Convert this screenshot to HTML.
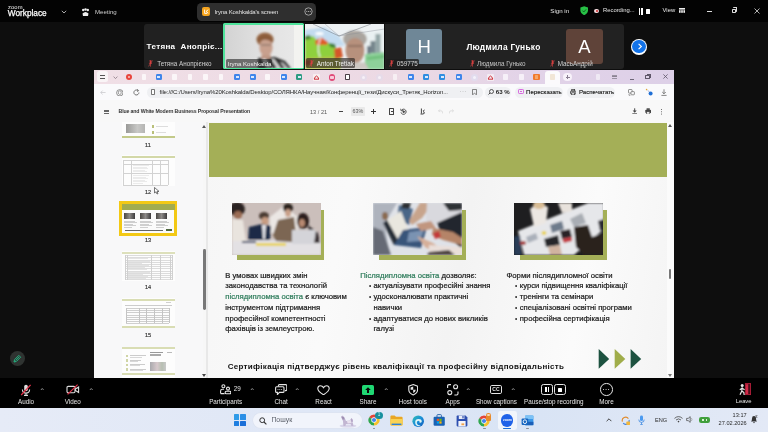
<!DOCTYPE html>
<html lang="uk">
<head>
<meta charset="utf-8">
<title>Zoom Meeting</title>
<style>
*{box-sizing:border-box;margin:0;padding:0}
html,body{width:768px;height:432px;overflow:hidden;background:#0d0d0d;font-family:"Liberation Sans",sans-serif;color:#fff}
#root{position:relative;width:768px;height:432px;overflow:hidden;background:#0e0e0e;opacity:0.9999}
.abs{position:absolute}
#topbar{left:0;top:0;width:768px;height:21.6px;background:#030303}
.t{position:absolute;white-space:nowrap;line-height:1}
/* participant tiles */
.tile{position:absolute;top:24px;height:45px;background:#1b1b1b;border-radius:3px;overflow:hidden}
.tile .nm{position:absolute;left:0;bottom:0;height:9px;font-size:6.3px;line-height:9px;color:#e8e8e8;white-space:nowrap;padding-left:2px}
.pin{display:inline-block;width:5px;height:7px;vertical-align:-1px;margin-right:2px}
/* shared screen */
#share{left:94px;top:70px;width:580px;height:308px;background:#f5f5f5;overflow:hidden}
#tabs{left:0;top:0;width:580px;height:13.7px;background:#ead9e4;overflow:hidden}
#addr{left:0;top:13.7px;width:580px;height:16px;background:#fafafc}
#pdfbar{left:0;top:29.6px;width:580px;height:22.4px;background:#f8f8f8}
#side{left:0;top:52px;width:114px;height:256px;background:#f8f8f9;overflow:hidden}
#main{left:112px;top:52px;width:468px;height:256px;background:#e8e8e8}
#slide{left:2px;top:0;width:458.8px;height:256px;background:linear-gradient(100deg,#f6f6f6 0%,#fafafa 30%,#f3f3f3 55%,#fbfbfb 80%,#f4f4f4 100%)}
#green{left:0.7px;top:0.6px;width:458.1px;height:54.6px;background:#a4af57}
.st{position:absolute;font-size:7.7px;line-height:10.75px;color:#1c1c1c;-webkit-text-stroke:0.22px currentColor;white-space:nowrap;font-family:"Liberation Sans",sans-serif}
.st .g{color:#2f7d5c}
.bu{display:inline-block;width:4.6px;margin-left:8.6px;font-style:normal;font-size:6.4px;-webkit-text-stroke:0}
/* zoom toolbar */
#ztb{left:0;top:378px;width:768px;height:29.5px;background:#000}
.zl{position:absolute;top:21px;font-size:6.3px;color:#e6e6e6;white-space:nowrap;transform:translateX(-50%);line-height:1}
/* taskbar */
#task{left:0;top:407.5px;width:768px;height:24.5px;background:linear-gradient(90deg,#e6ebf7 0%,#dfe7f6 40%,#d9e4f5 70%,#e3e9f6 100%)}
</style>
</head>
<body>
<div id="root">
  <div id="topbar" class="abs"></div>
  <!-- top bar content -->
  <div class="t" style="left:8px;top:4.6px;font-size:5.8px;color:#eee;letter-spacing:0.1px">zoom</div>
  <div class="t" style="left:7.8px;top:10.2px;font-size:8.25px;color:#fff;-webkit-text-stroke:0.25px #fff">Workplace</div>
  <svg class="abs" style="left:61px;top:10px" width="6" height="4" viewBox="0 0 6 4"><path d="M0.8 0.8 L3 3 L5.2 0.8" fill="none" stroke="#bbb" stroke-width="0.9"/></svg>
  <svg class="abs" style="left:81px;top:7.5px" width="9" height="9" viewBox="0 0 9 9"><circle cx="2.2" cy="2" r="1.2" fill="#eee"/><circle cx="6.8" cy="2" r="1.2" fill="#eee"/><circle cx="4.5" cy="1.5" r="1.3" fill="#eee"/><path d="M1.5 5.5 Q4.5 2.5 7.5 5.5 L7 8 L2 8 Z" fill="#eee"/></svg>
  <div class="t" style="left:95px;top:8.8px;font-size:6.1px;color:#cfcfcf">Meeting</div>
  <div class="abs" style="left:197px;top:3px;width:119px;height:17.5px;background:#2f2f2f;border-radius:4.5px"></div>
  <div class="abs" style="left:201.5px;top:7.3px;width:8.6px;height:9px;background:#f6a51f;border-radius:2px"></div>
  <svg class="abs" style="left:203.5px;top:9.4px" width="5" height="5" viewBox="0 0 5 5"><path d="M0.6 0.6 L0.6 4.4 L3.2 4.4 M4.3 0.7 L2 2.5 L4.3 4.2" fill="none" stroke="#fff" stroke-width="0.9"/></svg>
  <div class="t" style="left:214.5px;top:8.6px;font-size:6px;letter-spacing:-0.13px;color:#e2e2e2">Iryna Koshkalda's screen</div>
  <svg class="abs" style="left:303.5px;top:7px" width="9" height="9" viewBox="0 0 9 9"><circle cx="4.5" cy="4.5" r="3.7" fill="none" stroke="#ccc" stroke-width="0.7"/><circle cx="2.8" cy="4.5" r="0.5" fill="#ccc"/><circle cx="4.5" cy="4.5" r="0.5" fill="#ccc"/><circle cx="6.2" cy="4.5" r="0.5" fill="#ccc"/></svg>
  <div class="t" style="left:550.3px;top:7.8px;font-size:6.15px;color:#e6e6e6">Sign in</div>
  <svg class="abs" style="left:580px;top:6px" width="8.4" height="9.4" viewBox="0 0 8.4 9.4"><path d="M4.2 0.2 L8 1.5 L8 4.6 Q8 7.6 4.2 9.2 Q0.4 7.6 0.4 4.6 L0.4 1.5 Z" fill="#27c046"/><path d="M2.4 4.6 L3.8 6 L6.1 3.4" fill="none" stroke="#0b5a1c" stroke-width="0.9"/></svg>
  <div class="abs" style="left:594.2px;top:8.7px;width:4.6px;height:4.6px;border-radius:50%;background:#f3d9dc"></div>
  <div class="abs" style="left:595.5px;top:10px;width:2px;height:2px;border-radius:50%;background:#c62828"></div>
  <div class="t" style="left:603px;top:8px;font-size:5.85px;color:#e6e6e6">Recording...</div>
  <div class="abs" style="left:638.5px;top:8.4px;width:1.5px;height:6.2px;background:#fff"></div>
  <div class="abs" style="left:641.2px;top:8.4px;width:1.5px;height:6.2px;background:#fff"></div>
  <div class="abs" style="left:645.9px;top:9px;width:4.6px;height:4.8px;background:#fff;border-radius:0.5px"></div>
  <div class="t" style="left:662.5px;top:7.9px;font-size:5.9px;color:#e6e6e6">View</div>
  <svg class="abs" style="left:679px;top:8.2px" width="6" height="5" viewBox="0 0 6 5"><rect x="0" y="0" width="6" height="1.6" fill="#eee"/><rect x="0" y="2.2" width="1.6" height="2.6" fill="#eee"/><rect x="2.2" y="2.2" width="1.6" height="2.6" fill="#eee"/><rect x="4.4" y="2.2" width="1.6" height="2.6" fill="#eee"/></svg>
  <div class="abs" style="left:707px;top:10.6px;width:5px;height:0.8px;background:#ddd"></div>
  <div class="abs" style="left:731.5px;top:8.5px;width:4.6px;height:4.6px;border:0.8px solid #ddd;border-radius:0.8px"></div>
  <div class="abs" style="left:733px;top:7.3px;width:4.4px;height:4.4px;border-top:0.8px solid #ddd;border-right:0.8px solid #ddd;border-radius:0.8px"></div>
  <svg class="abs" style="left:754px;top:8px" width="6" height="6" viewBox="0 0 6 6"><path d="M0.5 0.5 L5.5 5.5 M5.5 0.5 L0.5 5.5" stroke="#ddd" stroke-width="0.8"/></svg>

  <!-- participants -->
  <div class="tile" style="left:144px;width:78.8px;background:#212121">
    <div class="t" style="left:2.6px;top:18.6px;font-size:8.1px;font-weight:bold;color:#fff;letter-spacing:0.3px">Тетяна&nbsp; Анопріє...</div>
    <div class="nm" style="left:2.4px;bottom:1px"><svg class="pin" viewBox="0 0 5 8"><path d="M1.2 0.3 L3.8 0.3 L3.4 1.2 L3.4 3 L4.6 4.4 L0.4 4.4 L1.6 3 L1.6 1.2 Z" fill="#d23b3b"/><path d="M2.5 4.4 L2.5 7.6" stroke="#d23b3b" stroke-width="0.8"/><path d="M0.3 7.3 L4.7 0.6" stroke="#e05050" stroke-width="0.7"/></svg><span style="color:#d0d0d0">&nbsp;Тетяна Анопрієнко</span></div>
  </div>
  <div class="tile" style="left:223.4px;width:80.8px;top:23.4px;height:46px;background:#4fe39b;border-radius:1.5px">
    <svg class="abs" style="left:1.4px;top:1.4px" width="78" height="43.2" viewBox="0 0 78 43.2">
      <defs><filter id="bv" x="-20%" y="-20%" width="140%" height="140%"><feGaussianBlur stdDeviation="1.1"/></filter><clipPath id="cv"><rect width="78" height="43.2"/></clipPath>
      <linearGradient id="wl" x1="0" y1="0" x2="1" y2="0"><stop offset="0" stop-color="#d3d3d3"/><stop offset="0.5" stop-color="#e2e2e2"/><stop offset="1" stop-color="#e9e9e9"/></linearGradient></defs>
      <g clip-path="url(#cv)">
      <rect width="78" height="43.2" fill="url(#wl)"/>
      <rect x="69" width="9" height="43.2" fill="#f3f3f0"/>
      <g filter="url(#bv)">
        <ellipse cx="40" cy="14.5" rx="8.6" ry="7" fill="#9a6b48"/>
        <ellipse cx="41" cy="22.5" rx="6.6" ry="8.8" fill="#c8a08e"/>
        <path d="M32 14 Q40 5 48 14 L47 17 Q40 12 33 17Z" fill="#8b5c3b"/>
        <path d="M36 20 L46 20" stroke="#6b5a55" stroke-width="0.8"/>
        <path d="M33 33 L50 32 L60 36 L66 43.2 L33 43.2Z" fill="#2f2f2f"/>
        <path d="M37 34 L40 33 L47 43.2 L42 43.2Z" fill="#e4e4e4"/>
        <path d="M46 34 L49 34 L56 43.2 L52 43.2Z" fill="#d8d8d8"/>
        <path d="M55 37 L58 38 L63 43.2 L60 43.2Z" fill="#cfcfcf"/>
        <path d="M36 30 L46 30 L45 34 L37 34Z" fill="#c09886"/>
      </g></g>
    </svg>
    <div class="abs" style="left:2.2px;top:35.4px;width:46.6px;height:9.2px;background:rgba(40,40,40,0.62);border-radius:1.5px"></div>
    <div class="t" style="left:4.4px;top:37.4px;font-size:6.1px;color:#f2f2f2">Iryna Koshkalda</div>
  </div>
  <div class="tile" style="left:304.6px;width:79.6px;top:23.8px;height:45.4px;border-radius:0;background:#dfeaf2">
    <svg class="abs" style="left:0;top:0" width="79.6" height="45.4" viewBox="0 0 79.6 45.4">
      <defs><clipPath id="cw"><rect width="79.6" height="45.4"/></clipPath></defs>
      <g clip-path="url(#cw)">
      <rect width="79.6" height="45.4" fill="#eef2f4"/>
      <g filter="url(#bv)">
        <path d="M0 6 L20 3 L34 12 L40 22 L0 22Z" fill="#c3dcf0"/>
        <path d="M0 14 L8 12 L12 16 L22 18 L30 22 L34 40 L0 40Z" fill="#8ed03e"/>
        <path d="M0 34 L36 32 L36 45.4 L0 45.4Z" fill="#b4c24a"/>
        <path d="M0 12 L5 11 L6 15 L0 16Z" fill="#4d8a36"/>
        <path d="M10 17 L16 13 L23 18 L22 21 L11 21Z" fill="#df5f2a"/>
        <ellipse cx="14.5" cy="9.5" rx="4.2" ry="1.5" fill="#fff"/>
        <path d="M16 13 Q11 24 15 33" fill="none" stroke="#f4f4f4" stroke-width="1.2"/>
        <path d="M24 19 L30 20 L31 24 L25 23Z" fill="#3f7f35"/>
        <path d="M29 25 L36 23 L38 33 L30 35Z" fill="#d4572b"/>
        <path d="M0 36 L6 35 L6 41 L0 42Z" fill="#c9552b"/>
        <path d="M60 8 L79.6 5 L79.6 30 L60 30Z" fill="#eaf1f2"/>
        <rect x="70.5" y="10" width="5" height="19" fill="#94a7a8"/>
        <rect x="65.5" y="17" width="5" height="12" fill="#76868c"/>
        <rect x="62" y="22" width="4" height="8" fill="#6f7d88"/>
        <path d="M60 30 L79.6 28 L79.6 45.4 L60 45.4Z" fill="#8ed19a"/>
        <path d="M62 33 L79.6 31 L79.6 34 L62 36Z" fill="#6fbf7c"/>
        <ellipse cx="50" cy="15" rx="11.8" ry="8.4" fill="#aaa59f"/>
        <ellipse cx="50" cy="26.5" rx="9.6" ry="12.6" fill="#b7917d"/>
        <path d="M43 22 L57 22" stroke="#6a5348" stroke-width="1"/>
        <path d="M36 45.4 L40 38.5 L60 38.5 L64 45.4Z" fill="#cdc7c2"/>
      </g>
      <path d="M8 0 L34 12 L66 0" fill="none" stroke="#6a7078" stroke-width="0.5"/>
      <path d="M20 0 L34 12 M34 12 L79.6 5" fill="none" stroke="#8a9098" stroke-width="0.4"/>
      </g>
    </svg>
    <div class="abs" style="left:1.6px;top:34.4px;width:48.8px;height:9.8px;background:rgba(45,40,36,0.66);border-radius:1.5px"></div>
    <div class="nm" style="left:2.6px;bottom:1.6px"><svg class="pin" viewBox="0 0 5 8"><path d="M1.2 0.3 L3.8 0.3 L3.4 1.2 L3.4 3 L4.6 4.4 L0.4 4.4 L1.6 3 L1.6 1.2 Z" fill="#d23b3b"/><path d="M2.5 4.4 L2.5 7.6" stroke="#d23b3b" stroke-width="0.8"/><path d="M0.3 7.3 L4.7 0.6" stroke="#e05050" stroke-width="0.7"/></svg><span style="color:#f2f2f2">&#8202;Anton Tretiak</span></div>
  </div>
  <div class="tile" style="left:384.6px;width:239px;border-radius:0 3px 3px 0;background:#222">
    <div class="abs" style="left:21.9px;top:5px;width:35.6px;height:35px;background:#6f8797;border-radius:3px"></div>
    <div class="t" style="left:21.9px;top:14.3px;width:35.6px;text-align:center;font-size:18.5px;color:#fff">H</div>
    <div class="abs" style="left:1.2px;top:34.6px;width:33.6px;height:9.6px;background:rgba(30,30,30,0.8);border-radius:1.5px"></div>
    <div class="nm" style="left:2.6px;bottom:1.4px"><svg class="pin" viewBox="0 0 5 8"><path d="M1.2 0.3 L3.8 0.3 L3.4 1.2 L3.4 3 L4.6 4.4 L0.4 4.4 L1.6 3 L1.6 1.2 Z" fill="#d23b3b"/><path d="M2.5 4.4 L2.5 7.6" stroke="#d23b3b" stroke-width="0.8"/><path d="M0.3 7.3 L4.7 0.6" stroke="#e05050" stroke-width="0.7"/></svg><span style="color:#d4d4d4">&#8202;059775</span></div>
    <div class="t" style="left:81.8px;top:18.6px;font-size:8.4px;font-weight:bold;color:#fff;letter-spacing:0.27px">Людмила Гунько</div>
    <div class="nm" style="left:83px;bottom:1.2px"><svg class="pin" viewBox="0 0 5 8"><path d="M1.2 0.3 L3.8 0.3 L3.4 1.2 L3.4 3 L4.6 4.4 L0.4 4.4 L1.6 3 L1.6 1.2 Z" fill="#d23b3b"/><path d="M2.5 4.4 L2.5 7.6" stroke="#d23b3b" stroke-width="0.8"/><path d="M0.3 7.3 L4.7 0.6" stroke="#e05050" stroke-width="0.7"/></svg><span style="color:#c4c4c4">&#8202;Людмила Гунько</span></div>
    <div class="abs" style="left:181.4px;top:4.8px;width:36.7px;height:35px;background:#5f4339;border-radius:3px"></div>
    <div class="t" style="left:181.4px;top:14.3px;width:36.7px;text-align:center;font-size:18.5px;color:#fff">A</div>
    <div class="nm" style="left:163.6px;bottom:1.4px"><svg class="pin" viewBox="0 0 5 8"><path d="M1.2 0.3 L3.8 0.3 L3.4 1.2 L3.4 3 L4.6 4.4 L0.4 4.4 L1.6 3 L1.6 1.2 Z" fill="#d23b3b"/><path d="M2.5 4.4 L2.5 7.6" stroke="#d23b3b" stroke-width="0.8"/><path d="M0.3 7.3 L4.7 0.6" stroke="#e05050" stroke-width="0.7"/></svg><span style="color:#d0d0d0">&#8202;МасьАндрій</span></div>
  </div>
  <div class="abs" style="left:631px;top:38.7px;width:16px;height:16px;border-radius:50%;background:#fff"></div>
  <div class="abs" style="left:632.2px;top:39.9px;width:13.6px;height:13.6px;border-radius:50%;background:#1273ea"></div>
  <svg class="abs" style="left:636.5px;top:43.2px" width="6" height="7" viewBox="0 0 6 7"><path d="M1.6 0.8 L4.4 3.5 L1.6 6.2" fill="none" stroke="#fff" stroke-width="1.1"/></svg>


  <div id="share" class="abs">
    <div id="tabs" class="abs"><div class="abs" style="left:0;top:-0.6px">
      <div class="abs" style="left:0;top:0;width:580px;height:15px;background:linear-gradient(90deg,#f0dfe6 0%,#ecd9e4 55%,#e2d3e8 75%,#ddd0e8 100%)"></div>
      <div class="abs" style="left:3px;top:2px;width:11px;height:11px;background:#f9f4f6;border-radius:2.5px"></div>
      <div class="abs" style="left:6px;top:5.6px;width:5px;height:3.6px;border-top:1.1px solid #555;border-bottom:1.1px solid #555"></div>
      <svg class="abs" style="left:18.5px;top:6.3px" width="5" height="3.4" viewBox="0 0 5 3.4"><path d="M0.6 0.6 L2.5 2.6 L4.4 0.6" fill="none" stroke="#8a7a84" stroke-width="0.8"/></svg>
      <div class="abs" style="left:31.5px;top:4.6px;width:6.4px;height:6.4px;border-radius:50%;background:#e8453c"></div>
      <div class="abs" style="left:33.5px;top:6.6px;width:2.4px;height:2.4px;border-radius:50%;background:#f7c9c4"></div>
      <div class="abs" style="left:47.5px;top:4.7px;width:4.6px;height:5.8px;background:#fbf6f8;border-radius:0.8px;opacity:1"></div>
      <div class="abs" style="left:78px;top:4.7px;width:4.6px;height:5.8px;background:#fbf6f8;border-radius:0.8px;opacity:1"></div>
      <div class="abs" style="left:93.5px;top:4.7px;width:4.6px;height:5.8px;background:#fbf6f8;border-radius:0.8px;opacity:1"></div>
      <div class="abs" style="left:109px;top:4.7px;width:4.6px;height:5.8px;background:#fbf6f8;border-radius:0.8px;opacity:1"></div>
      <div class="abs" style="left:124.5px;top:4.7px;width:4.6px;height:5.8px;background:#fbf6f8;border-radius:0.8px;opacity:1"></div>
      <div class="abs" style="left:171px;top:4.7px;width:4.6px;height:5.8px;background:#fbf6f8;border-radius:0.8px;opacity:1"></div>
      <div class="abs" style="left:186px;top:4.7px;width:4.6px;height:5.8px;background:#fbf6f8;border-radius:0.8px;opacity:1"></div>
      <div class="abs" style="left:61.5px;top:4.4px;width:6.2px;height:6.6px;background:#3f86ea;border-radius:1.2px"></div><div class="abs" style="left:63.0px;top:6.2px;width:3.2px;height:0.7px;background:#dbe8fb"></div><div class="abs" style="left:63.0px;top:7.6px;width:3.2px;height:0.7px;background:#dbe8fb"></div>
      <div class="abs" style="left:140px;top:4.4px;width:6.2px;height:6.6px;background:#3f86ea;border-radius:1.2px"></div><div class="abs" style="left:141.5px;top:6.2px;width:3.2px;height:0.7px;background:#dbe8fb"></div><div class="abs" style="left:141.5px;top:7.6px;width:3.2px;height:0.7px;background:#dbe8fb"></div>
      <div class="abs" style="left:155.5px;top:4.4px;width:6.2px;height:6.6px;background:#3f86ea;border-radius:1.2px"></div><div class="abs" style="left:157.0px;top:6.2px;width:3.2px;height:0.7px;background:#dbe8fb"></div><div class="abs" style="left:157.0px;top:7.6px;width:3.2px;height:0.7px;background:#dbe8fb"></div>
      <div class="abs" style="left:186.5px;top:4.4px;width:6.2px;height:6.6px;background:#3f86ea;border-radius:1.2px"></div><div class="abs" style="left:188.0px;top:6.2px;width:3.2px;height:0.7px;background:#dbe8fb"></div><div class="abs" style="left:188.0px;top:7.6px;width:3.2px;height:0.7px;background:#dbe8fb"></div>
      <div class="abs" style="left:202px;top:4.4px;width:6.2px;height:6.6px;background:#2e9c82;border-radius:1.2px"></div><div class="abs" style="left:203.5px;top:6.2px;width:3.2px;height:0.7px;background:#dbe8fb"></div><div class="abs" style="left:203.5px;top:7.6px;width:3.2px;height:0.7px;background:#dbe8fb"></div>
      <svg class="abs" style="left:218.5px;top:4.4px" width="7" height="7" viewBox="0 0 7 7"><rect width="7" height="7" rx="1" fill="#f8eef0"/><path d="M1.2 5 Q3.5 -1 5.8 5 M1 5.2 L6 5.2" fill="none" stroke="#d0343c" stroke-width="1"/></svg>
      <div class="abs" style="left:234.6px;top:4.4px;width:6.8px;height:6.8px;border-radius:50%;background:#e04a78"></div><div class="abs" style="left:236.4px;top:6.2px;width:3.2px;height:3.2px;border-radius:0.8px;background:#f7cddb"></div>
      <div class="abs" style="left:251.2px;top:4.3px;width:4.8px;height:6.6px;background:#fff;border:0.8px solid #4a4046;border-radius:0.8px"></div>
      <div class="abs" style="left:265.5px;top:4.2px;width:7px;height:7px;border-radius:50%;background:#e6dbe9"></div><div class="abs" style="left:267.5px;top:6.2px;width:3px;height:3px;border-radius:50%;background:#f6f0f7"></div>
      <div class="abs" style="left:281.5px;top:4.2px;width:7px;height:7px;border-radius:50%;background:#e6dbe9"></div><div class="abs" style="left:283.5px;top:6.2px;width:3px;height:3px;border-radius:50%;background:#f6f0f7"></div>
      <div class="abs" style="left:298.5px;top:4.7px;width:4.6px;height:5.8px;background:#f7eff3;border-radius:0.8px;opacity:1"></div>
      <div class="abs" style="left:313.5px;top:4.4px;width:6.2px;height:6.6px;background:#3f86ea;border-radius:1.2px"></div><div class="abs" style="left:315.0px;top:6.2px;width:3.2px;height:0.7px;background:#dbe8fb"></div><div class="abs" style="left:315.0px;top:7.6px;width:3.2px;height:0.7px;background:#dbe8fb"></div>
      <div class="abs" style="left:361.5px;top:4.4px;width:6.2px;height:6.6px;background:#3f86ea;border-radius:1.2px"></div><div class="abs" style="left:363.0px;top:6.2px;width:3.2px;height:0.7px;background:#dbe8fb"></div><div class="abs" style="left:363.0px;top:7.6px;width:3.2px;height:0.7px;background:#dbe8fb"></div>
      <div class="abs" style="left:329px;top:4.4px;width:6.2px;height:6.6px;background:#2f8de0;border-radius:1.2px"></div><div class="abs" style="left:330.5px;top:6.2px;width:3.2px;height:0.7px;background:#dbe8fb"></div><div class="abs" style="left:330.5px;top:7.6px;width:3.2px;height:0.7px;background:#dbe8fb"></div>
      <div class="abs" style="left:345px;top:4.4px;width:6.2px;height:6.6px;background:#2f8de0;border-radius:1.2px"></div><div class="abs" style="left:346.5px;top:6.2px;width:3.2px;height:0.7px;background:#dbe8fb"></div><div class="abs" style="left:346.5px;top:7.6px;width:3.2px;height:0.7px;background:#dbe8fb"></div>
      <div class="abs" style="left:376.8px;top:4.2px;width:7px;height:7px;border-radius:50%;background:#e2dcee"></div><div class="abs" style="left:378.8px;top:6.2px;width:3px;height:3px;border-radius:50%;background:#f4f2fa"></div>
      <svg class="abs" style="left:392.6px;top:4.4px" width="7" height="7" viewBox="0 0 7 7"><rect width="7" height="7" rx="1" fill="#f3ebf3"/><path d="M1.2 5 Q3.5 -1 5.8 5 M1 5.2 L6 5.2" fill="none" stroke="#d0343c" stroke-width="1"/></svg>
      <div class="abs" style="left:409px;top:4.7px;width:4.6px;height:5.8px;background:#f6f0f8;border-radius:0.8px;opacity:1"></div>
      <div class="abs" style="left:425px;top:4.7px;width:4.6px;height:5.8px;background:#f6f0f8;border-radius:0.8px;opacity:1"></div>
      <div class="abs" style="left:439px;top:4.2px;width:6.8px;height:6.8px;background:#f07a2c;border-radius:1px"></div><div class="abs" style="left:440.5px;top:5.8px;width:3.8px;height:3.6px;background:#f7a868;border-radius:0.6px"></div>
      <div class="abs" style="left:451.2px;top:1.6px;width:15px;height:13.4px;background:#fbfafc;border-radius:3px 3px 0 0"></div>
      <div class="abs" style="left:456.4px;top:4.6px;width:4.6px;height:6px;background:#f1e6d6;border-radius:0.8px"></div>
      <div class="abs" style="left:469.4px;top:3.4px;width:8.6px;height:8.6px;border-radius:50%;background:#f8f2fa"></div>
      <div class="abs" style="left:471.6px;top:7.3px;width:4.2px;height:0.8px;background:#8a7f92"></div><div class="abs" style="left:473.3px;top:5.6px;width:0.8px;height:4.2px;background:#8a7f92"></div>
      <div class="abs" style="left:502px;top:4.8px;width:4.4px;height:5.4px;background:#efe9f4;border-radius:1px"></div>
      <div class="abs" style="left:518px;top:5.6px;width:4.6px;height:3.6px;border-top:0.9px solid #9a92a2;border-bottom:0.9px solid #9a92a2"></div><div class="abs" style="left:518px;top:7px;width:4.6px;height:0.9px;background:#8a8292"></div>
      <div class="abs" style="left:536px;top:9.2px;width:4px;height:0.8px;background:#6e6678"></div>
      <div class="abs" style="left:551.4px;top:5.6px;width:4.2px;height:4.2px;border:0.8px solid #5e5668;border-radius:0.6px"></div><div class="abs" style="left:552.7px;top:4.5px;width:4px;height:4px;border-top:0.8px solid #5e5668;border-right:0.8px solid #5e5668"></div>
      <svg class="abs" style="left:568.5px;top:5px" width="5" height="5" viewBox="0 0 5 5"><path d="M0.4 0.4 L4.6 4.6 M4.6 0.4 L0.4 4.6" stroke="#5e5668" stroke-width="0.8"/></svg>
    </div></div>
    <div id="addr" class="abs"><div class="abs" style="left:0;top:1.3px">
      <svg class="abs" style="left:5.5px;top:5px" width="6" height="5" viewBox="0 0 6 5"><path d="M5.6 2.5 L0.8 2.5 M2.6 0.6 L0.7 2.5 L2.6 4.4" fill="none" stroke="#c4c4c8" stroke-width="0.7"/></svg>
      <svg class="abs" style="left:21.8px;top:3.6px" width="7.6" height="7.6" viewBox="0 0 7.6 7.6"><circle cx="3.8" cy="3.8" r="3.2" fill="none" stroke="#666" stroke-width="0.7"/><path d="M3.8 1.8 L5.2 2.4 L5.2 3.9 Q5.2 5.2 3.8 5.9 Q2.4 5.2 2.4 3.9 L2.4 2.4 Z" fill="none" stroke="#666" stroke-width="0.6"/></svg>
      <svg class="abs" style="left:39px;top:3.8px" width="7" height="7" viewBox="0 0 7 7"><path d="M5.9 3.5 A2.5 2.5 0 1 1 4.9 1.5" fill="none" stroke="#555" stroke-width="0.8"/><path d="M4 0.4 L5.6 1.5 L4.3 2.9" fill="none" stroke="#555" stroke-width="0.8"/></svg>
      <div class="abs" style="left:52.6px;top:1.6px;width:336px;height:11px;background:#eff0f3;border-radius:5.5px"></div>
      <div class="abs" style="left:56.6px;top:4px;width:4.2px;height:5.6px;border:0.6px solid #777;border-radius:0.8px;background:#fff"></div>
      <div class="t" id="url" style="left:65.6px;top:3.9px;font-size:6px;color:#1e1e1e;letter-spacing:-0.105px">file:///C:/Users/Iryna%20Koshkalda/Desktop/СОЛЯНКА/Научная/Конференції_тези/Дискуси_Третяк_Horizon...</div>
      <div class="t" style="left:365.5px;top:3.2px;font-size:6px;color:#888;letter-spacing:0.4px">···</div>
      <svg class="abs" style="left:378.4px;top:4px" width="5" height="6.4" viewBox="0 0 5 6.4"><path d="M0.5 0.5 L4.5 0.5 L4.5 5.8 L2.5 4.3 L0.5 5.8 Z" fill="none" stroke="#555" stroke-width="0.7"/></svg>
      <div class="abs" style="left:391px;top:1.6px;width:25.5px;height:11px;background:#eff0f3;border-radius:5.5px"></div>
      <svg class="abs" style="left:394.4px;top:4px" width="6" height="6" viewBox="0 0 6 6"><circle cx="3.5" cy="2.5" r="2" fill="none" stroke="#333" stroke-width="0.8"/><path d="M2 4 L0.5 5.5" stroke="#333" stroke-width="0.9"/></svg>
      <div class="t" style="left:401.8px;top:4px;font-size:6.1px;color:#222;font-weight:bold">63 %</div>
      <div class="abs" style="left:421.4px;top:1.6px;width:47.6px;height:11px;background:#eff0f3;border-radius:5.5px"></div>
      <div class="abs" style="left:424.2px;top:4.2px;width:5.6px;height:5px;border:0.9px solid #d86adf;border-radius:1.2px"></div><div class="abs" style="left:425.6px;top:6.3px;width:2.8px;height:0.8px;background:#d86adf"></div>
      <div class="t" style="left:432px;top:4px;font-size:6.1px;color:#222;-webkit-text-stroke:0.15px #222">Пересказать</div>
      <div class="abs" style="left:473.4px;top:1.6px;width:47.6px;height:11px;background:#eff0f3;border-radius:5.5px"></div>
      <svg class="abs" style="left:476px;top:3.8px" width="6.4" height="6.4" viewBox="0 0 6.4 6.4"><rect x="0.5" y="2" width="5.4" height="3" rx="0.8" fill="none" stroke="#333" stroke-width="0.8"/><rect x="1.7" y="0.5" width="3" height="1.6" fill="none" stroke="#333" stroke-width="0.7"/><rect x="1.7" y="3.8" width="3" height="2.1" fill="#eff0f3" stroke="#333" stroke-width="0.7"/></svg>
      <div class="t" style="left:485px;top:4px;font-size:6.1px;color:#222;-webkit-text-stroke:0.15px #222">Распечатать</div>
      <svg class="abs" style="left:534px;top:3.8px" width="7" height="7" viewBox="0 0 7 7"><rect x="0.5" y="0.5" width="3.6" height="3.6" rx="0.6" fill="none" stroke="#666" stroke-width="0.7"/><rect x="3" y="2.6" width="3.4" height="3.2" rx="0.6" fill="#f8f8fa" stroke="#666" stroke-width="0.7"/><path d="M1 5 L1 6.3 L2.4 6.3" fill="none" stroke="#666" stroke-width="0.6"/></svg>
      <svg class="abs" style="left:551px;top:3.4px" width="8" height="8" viewBox="0 0 8 8"><circle cx="1.6" cy="1.6" r="0.8" fill="#e0a63a"/><path d="M2.6 2.6 Q4.4 3 4.6 4.6" fill="none" stroke="#9aa0c8" stroke-width="0.7"/><circle cx="5.6" cy="5.6" r="2" fill="#1f6fd6"/></svg>
      <svg class="abs" style="left:567.4px;top:3.6px" width="6" height="7" viewBox="0 0 6 7"><path d="M3 0.3 L3 4.6 M1.2 3 L3 4.8 L4.8 3 M0.4 6.4 L5.6 6.4" fill="none" stroke="#555" stroke-width="0.7"/></svg>
    </div></div>
    <div id="pdfbar" class="abs"><div class="abs" style="left:0;top:1.9px">
      <div class="abs" style="left:9.8px;top:8.4px;width:4.8px;height:3.8px;border-top:0.9px solid #666;border-bottom:0.9px solid #666"></div><div class="abs" style="left:9.8px;top:9.8px;width:4.8px;height:0.9px;background:#666"></div>
      <div class="t" id="ptitle" style="left:24.6px;top:7.9px;font-size:5.2px;font-weight:bold;color:#333;letter-spacing:-0.14px">Blue and White Modern Business Proposal Presentation</div>
      <div class="t" style="left:216px;top:8.4px;font-size:5.6px;color:#555">13&nbsp;/ 21</div>
      <div class="abs" style="left:245px;top:9.9px;width:4.2px;height:0.9px;background:#444"></div>
      <div class="abs" style="left:256.6px;top:5.6px;width:14.6px;height:9.4px;background:#e9e9e9;border-radius:1px"></div>
      <div class="t" style="left:258.4px;top:7.7px;font-size:5.4px;color:#555">63%</div>
      <div class="abs" style="left:277px;top:9.9px;width:4.6px;height:0.9px;background:#333"></div><div class="abs" style="left:278.9px;top:8.0px;width:0.9px;height:4.6px;background:#333"></div>
      <div class="abs" style="left:295.4px;top:7px;width:4.6px;height:6.4px;border:0.9px solid #444;border-radius:0.6px"></div><div class="abs" style="left:296.8px;top:9.7px;width:1.8px;height:1px;background:#444"></div>
      <svg class="abs" style="left:305.6px;top:6.6px" width="7" height="7" viewBox="0 0 7 7"><path d="M1.3 2.4 A2.6 2.6 0 1 1 1 4.4" fill="none" stroke="#444" stroke-width="0.9"/><path d="M0.6 0.8 L1.2 2.8 L3.1 2.3" fill="none" stroke="#444" stroke-width="0.8"/><path d="M3.7 2.2 L5.2 3.7 L3.7 5.2 L2.2 3.7 Z" fill="#444"/></svg>
      <svg class="abs" style="left:325.6px;top:6.8px" width="6" height="7" viewBox="0 0 6 7"><path d="M1.4 0.5 L1.4 5.6 M0.5 6 L3 6 Q5.6 5.6 3.6 3.6 Q2.6 2.6 4.6 2" fill="none" stroke="#444" stroke-width="1"/></svg>
      <svg class="abs" style="left:343.6px;top:7.6px" width="5" height="5" viewBox="0 0 5 5"><path d="M0.6 1.8 L3 1.8 Q4.5 1.8 4.5 3.2 L4.5 4.4 M1.8 0.5 L0.5 1.8 L1.8 3.1" fill="none" stroke="#cfcfcf" stroke-width="0.6"/></svg>
      <svg class="abs" style="left:355.4px;top:7.6px" width="5" height="5" viewBox="0 0 5 5"><path d="M4.4 1.8 L2 1.8 Q0.5 1.8 0.5 3.2 L0.5 4.4 M3.2 0.5 L4.5 1.8 L3.2 3.1" fill="none" stroke="#cfcfcf" stroke-width="0.6"/></svg>
      <svg class="abs" style="left:538px;top:6.6px" width="5.4" height="6.4" viewBox="0 0 5.4 6.4"><path d="M2.7 0.3 L2.7 3.2" stroke="#444" stroke-width="1"/><path d="M0.7 2.6 L2.7 4.8 L4.7 2.6 Z" fill="#444"/><path d="M0.3 5.8 L5.1 5.8" stroke="#444" stroke-width="0.9"/></svg>
      <svg class="abs" style="left:551px;top:6.6px" width="6.4" height="6.4" viewBox="0 0 6.4 6.4"><rect x="0.3" y="1.8" width="5.8" height="3.2" rx="0.8" fill="#444"/><rect x="1.6" y="0.3" width="3.2" height="1.6" fill="#444"/><rect x="1.6" y="3.8" width="3.2" height="2.3" fill="#f7f7f7" stroke="#444" stroke-width="0.6"/></svg>
      <div class="abs" style="left:567.2px;top:7.2px;width:1.1px;height:1.1px;background:#444;border-radius:50%;box-shadow:0 2.2px 0 #444,0 4.4px 0 #444"></div>
    </div></div>
    <div id="side" class="abs">
      <style>.th{position:absolute;left:27.5px;width:53px;background:#fdfdfd}.gb{position:absolute;left:0;width:53px;height:2px;background:#cfd5a0}.pn{position:absolute;left:44px;width:20px;text-align:center;font-size:5.6px;color:#333;line-height:6px;-webkit-text-stroke:0.15px #333}</style>
      <div class="th" style="top:-14px;height:30px"><div class="gb" style="top:27.5px;background:#c3ca8a"></div><div class="abs" style="left:4.5px;top:16px;width:19px;height:9px;background:linear-gradient(90deg,#9a9a98,#c8c8c6 60%,#b5b5b3)"></div><div class="abs" style="left:30px;top:17px;width:2.5px;height:2.5px;background:#b9c07a"></div><div class="abs" style="left:30px;top:23px;width:2.5px;height:2.5px;background:#b9c07a"></div><div class="abs" style="left:34px;top:17.5px;width:12px;height:1px;background:#ddd"></div><div class="abs" style="left:34px;top:23.5px;width:10px;height:1px;background:#ddd"></div></div>
      <div class="pn" style="top:19.7px">11</div>
      <div class="th" style="top:33px;height:31px"><div class="gb" style="top:1px;background:#d3d8a8"></div><div class="abs" style="left:1px;top:5px;width:45px;height:0.6px;background:#d2d2d2"></div><div class="abs" style="left:1px;top:8.5px;width:45px;height:0.6px;background:#d2d2d2"></div><div class="abs" style="left:1px;top:18px;width:45px;height:0.6px;background:#d2d2d2"></div><div class="abs" style="left:1px;top:29.5px;width:45px;height:0.6px;background:#d2d2d2"></div><div class="abs" style="left:1px;top:5px;width:0.6px;height:25px;background:#d2d2d2"></div><div class="abs" style="left:9.5px;top:5px;width:0.6px;height:25px;background:#d2d2d2"></div><div class="abs" style="left:30px;top:5px;width:0.6px;height:25px;background:#d2d2d2"></div><div class="abs" style="left:38px;top:5px;width:0.6px;height:25px;background:#d2d2d2"></div><div class="abs" style="left:46px;top:5px;width:0.6px;height:25px;background:#d2d2d2"></div><div class="abs" style="left:11px;top:10px;width:16px;height:0.5px;background:#ebebeb"></div><div class="abs" style="left:11px;top:11.5px;width:14px;height:0.5px;background:#ebebeb"></div><div class="abs" style="left:11px;top:13px;width:15px;height:0.5px;background:#ebebeb"></div><div class="abs" style="left:11px;top:14.5px;width:12px;height:0.5px;background:#ebebeb"></div><div class="abs" style="left:11px;top:16px;width:14px;height:0.5px;background:#ebebeb"></div><div class="abs" style="left:11px;top:20px;width:16px;height:0.5px;background:#ebebeb"></div><div class="abs" style="left:11px;top:21.5px;width:13px;height:0.5px;background:#ebebeb"></div><div class="abs" style="left:11px;top:23px;width:15px;height:0.5px;background:#ebebeb"></div><div class="abs" style="left:11px;top:24.5px;width:12px;height:0.5px;background:#ebebeb"></div><div class="abs" style="left:11px;top:26px;width:14px;height:0.5px;background:#ebebeb"></div><div class="abs" style="left:11px;top:27.5px;width:10px;height:0.5px;background:#ebebeb"></div></div>
      <div class="pn" style="top:67px">12</div>
      <svg class="abs" style="left:60px;top:64.5px" width="6" height="8" viewBox="0 0 6 8"><path d="M0.5 0.5 L0.5 6 L2 4.8 L3 7 L4 6.6 L3 4.4 L5 4.4 Z" fill="#fff" stroke="#222" stroke-width="0.6"/></svg>
      <div class="abs" style="left:25.2px;top:79px;width:57.7px;height:34.8px;background:#f3c915"></div>
      <div class="th" style="left:27.7px;width:52.7px;top:81.5px;height:29.8px;background:#fbfbfb"><div class="abs" style="left:0;top:0.5px;width:53px;height:5.7px;background:#a2ac4f"></div><div class="abs" style="left:2.5px;top:9.5px;width:11px;height:5.6px;background:linear-gradient(90deg,#4a4744,#8d8a88 50%,#3c3b3c)"></div><div class="abs" style="left:2.5px;top:17.5px;width:11px;height:0.6px;background:#cfcfcf"></div><div class="abs" style="left:2.5px;top:18.9px;width:13px;height:0.6px;background:#cfcfcf"></div><div class="abs" style="left:2.5px;top:20.3px;width:9px;height:0.6px;background:#cfcfcf"></div><div class="abs" style="left:2.5px;top:21.7px;width:12px;height:0.6px;background:#cfcfcf"></div><div class="abs" style="left:2.5px;top:23.1px;width:8px;height:0.6px;background:#cfcfcf"></div><div class="abs" style="left:18.6px;top:9.5px;width:11px;height:5.6px;background:linear-gradient(90deg,#4a4744,#8d8a88 50%,#3c3b3c)"></div><div class="abs" style="left:18.6px;top:17.5px;width:11px;height:0.6px;background:#cfcfcf"></div><div class="abs" style="left:18.6px;top:18.9px;width:13px;height:0.6px;background:#cfcfcf"></div><div class="abs" style="left:18.6px;top:20.3px;width:9px;height:0.6px;background:#cfcfcf"></div><div class="abs" style="left:18.6px;top:21.7px;width:12px;height:0.6px;background:#cfcfcf"></div><div class="abs" style="left:18.6px;top:23.1px;width:8px;height:0.6px;background:#cfcfcf"></div><div class="abs" style="left:34.6px;top:9.5px;width:11px;height:5.6px;background:linear-gradient(90deg,#4a4744,#8d8a88 50%,#3c3b3c)"></div><div class="abs" style="left:34.6px;top:17.5px;width:11px;height:0.6px;background:#cfcfcf"></div><div class="abs" style="left:34.6px;top:18.9px;width:13px;height:0.6px;background:#cfcfcf"></div><div class="abs" style="left:34.6px;top:20.3px;width:9px;height:0.6px;background:#cfcfcf"></div><div class="abs" style="left:34.6px;top:21.7px;width:12px;height:0.6px;background:#cfcfcf"></div><div class="abs" style="left:34.6px;top:23.1px;width:8px;height:0.6px;background:#cfcfcf"></div><div class="abs" style="left:3px;top:26.7px;width:38px;height:0.9px;background:#666"></div><div class="abs" style="left:44.5px;top:25.7px;width:6px;height:2.2px;background:#50683f"></div></div>
      <div class="pn" style="top:115px">13</div>
      <div class="th" style="top:129.3px;height:30px"><div class="gb" style="top:0.5px;background:#dde0bb"></div><div class="abs" style="left:3px;top:4.0px;width:47.5px;height:0.5px;background:#dcdcdc"></div><div class="abs" style="left:3px;top:6.2px;width:47.5px;height:0.5px;background:#dcdcdc"></div><div class="abs" style="left:3px;top:8.4px;width:47.5px;height:0.5px;background:#dcdcdc"></div><div class="abs" style="left:3px;top:10.600000000000001px;width:47.5px;height:0.5px;background:#dcdcdc"></div><div class="abs" style="left:3px;top:12.8px;width:47.5px;height:0.5px;background:#dcdcdc"></div><div class="abs" style="left:3px;top:15.0px;width:47.5px;height:0.5px;background:#dcdcdc"></div><div class="abs" style="left:3px;top:17.200000000000003px;width:47.5px;height:0.5px;background:#dcdcdc"></div><div class="abs" style="left:3px;top:19.400000000000002px;width:47.5px;height:0.5px;background:#dcdcdc"></div><div class="abs" style="left:3px;top:21.6px;width:47.5px;height:0.5px;background:#dcdcdc"></div><div class="abs" style="left:3px;top:23.8px;width:47.5px;height:0.5px;background:#dcdcdc"></div><div class="abs" style="left:3px;top:26.0px;width:47.5px;height:0.5px;background:#dcdcdc"></div><div class="abs" style="left:3px;top:28.200000000000003px;width:47.5px;height:0.5px;background:#dcdcdc"></div><div class="abs" style="left:3px;top:4px;width:0.6px;height:24.5px;background:#d0d0d0"></div><div class="abs" style="left:5px;top:4px;width:0.6px;height:24.5px;background:#d0d0d0"></div><div class="abs" style="left:29px;top:4px;width:0.6px;height:24.5px;background:#d0d0d0"></div><div class="abs" style="left:38.8px;top:4px;width:0.6px;height:24.5px;background:#d0d0d0"></div><div class="abs" style="left:48.5px;top:4px;width:0.6px;height:24.5px;background:#d0d0d0"></div><div class="abs" style="left:50.5px;top:4px;width:0.6px;height:24.5px;background:#d0d0d0"></div><div class="abs" style="left:6px;top:7.2px;width:20px;height:0.6px;background:#e4e4e4"></div><div class="abs" style="left:6px;top:9.4px;width:22px;height:0.6px;background:#e4e4e4"></div><div class="abs" style="left:6px;top:11.600000000000001px;width:14px;height:0.6px;background:#e4e4e4"></div><div class="abs" style="left:6px;top:13.8px;width:21px;height:0.6px;background:#e4e4e4"></div><div class="abs" style="left:6px;top:16.0px;width:17px;height:0.6px;background:#e4e4e4"></div><div class="abs" style="left:6px;top:18.2px;width:19px;height:0.6px;background:#e4e4e4"></div><div class="abs" style="left:6px;top:20.400000000000002px;width:22px;height:0.6px;background:#e4e4e4"></div><div class="abs" style="left:6px;top:22.6px;width:15px;height:0.6px;background:#e4e4e4"></div><div class="abs" style="left:6px;top:24.8px;width:20px;height:0.6px;background:#e4e4e4"></div><div class="abs" style="left:6px;top:27.0px;width:18px;height:0.6px;background:#e4e4e4"></div></div>
      <div class="pn" style="top:162.4px">14</div>
      <div class="th" style="top:176.3px;height:30px"><div class="gb" style="top:0.3px;background:#d9ddb4"></div><div class="gb" style="top:27.3px;background:#d9ddb4"></div><div class="abs" style="left:4.5px;top:10.0px;width:42.5px;height:0.5px;background:#cfcfcf"></div><div class="abs" style="left:4.5px;top:12.1px;width:42.5px;height:0.5px;background:#cfcfcf"></div><div class="abs" style="left:4.5px;top:14.2px;width:42.5px;height:0.5px;background:#cfcfcf"></div><div class="abs" style="left:4.5px;top:16.3px;width:42.5px;height:0.5px;background:#cfcfcf"></div><div class="abs" style="left:4.5px;top:18.4px;width:42.5px;height:0.5px;background:#cfcfcf"></div><div class="abs" style="left:4.5px;top:20.5px;width:42.5px;height:0.5px;background:#cfcfcf"></div><div class="abs" style="left:4.5px;top:22.6px;width:42.5px;height:0.5px;background:#cfcfcf"></div><div class="abs" style="left:4.5px;top:24.700000000000003px;width:42.5px;height:0.5px;background:#cfcfcf"></div><div class="abs" style="left:4.5px;top:10px;width:0.7px;height:14.7px;background:#c4c4c4"></div><div class="abs" style="left:17px;top:10px;width:0.7px;height:14.7px;background:#c4c4c4"></div><div class="abs" style="left:24.5px;top:10px;width:0.7px;height:14.7px;background:#c4c4c4"></div><div class="abs" style="left:32px;top:10px;width:0.7px;height:14.7px;background:#c4c4c4"></div><div class="abs" style="left:40px;top:10px;width:0.7px;height:14.7px;background:#c4c4c4"></div><div class="abs" style="left:47px;top:10px;width:0.7px;height:14.7px;background:#c4c4c4"></div><div class="abs" style="left:3px;top:6.5px;width:47px;height:0.6px;background:#ccc"></div><div class="abs" style="left:44px;top:3.5px;width:5px;height:0.6px;background:#cfcfcf"></div></div>
      <div class="pn" style="top:209.8px">15</div>
      <div class="th" style="top:224.8px;height:31px"><div class="gb" style="top:0.4px;background:#d9ddb4"></div><div class="gb" style="top:26.6px;background:#d9ddb4"></div><div class="abs" style="left:4px;top:8.0px;width:2.6px;height:2.6px;background:#d0d5a6"></div><div class="abs" style="left:8.5px;top:8.6px;width:16px;height:0.6px;background:#ccc"></div><div class="abs" style="left:8.5px;top:9.9px;width:12px;height:0.6px;background:#d8d8d8"></div><div class="abs" style="left:4px;top:12.4px;width:2.6px;height:2.6px;background:#d0d5a6"></div><div class="abs" style="left:8.5px;top:13.0px;width:11px;height:0.6px;background:#ccc"></div><div class="abs" style="left:8.5px;top:14.3px;width:8px;height:0.6px;background:#d8d8d8"></div><div class="abs" style="left:4px;top:16.8px;width:2.6px;height:2.6px;background:#d0d5a6"></div><div class="abs" style="left:8.5px;top:17.4px;width:15px;height:0.6px;background:#ccc"></div><div class="abs" style="left:8.5px;top:18.700000000000003px;width:10px;height:0.6px;background:#d8d8d8"></div><div class="abs" style="left:4px;top:21.200000000000003px;width:2.6px;height:2.6px;background:#d0d5a6"></div><div class="abs" style="left:8.5px;top:21.8px;width:16px;height:0.6px;background:#ccc"></div><div class="abs" style="left:8.5px;top:23.1px;width:13px;height:0.6px;background:#d8d8d8"></div><div class="abs" style="left:28.3px;top:5px;width:13px;height:1.2px;background:#999"></div><div class="abs" style="left:28.3px;top:7.6px;width:11px;height:1.2px;background:#aaa"></div><div class="abs" style="left:45px;top:5.5px;width:5px;height:0.7px;background:#bbb"></div><div class="abs" style="left:28.3px;top:15px;width:16.7px;height:9px;background:linear-gradient(90deg,#a9a9ad,#d7c9cc 45%,#b7bfb2 75%,#c9c9c9)"></div></div>
      <div class="abs" style="left:108.6px;top:0;width:4.2px;height:256px;background:#f7f7f7"></div>
      <div class="abs" style="left:109.1px;top:127.2px;width:2.9px;height:60.5px;background:#787878;border-radius:1.4px"></div>
      <svg class="abs" style="left:108.4px;top:2.5px" width="4" height="3" viewBox="0 0 4 3"><polygon points="0,3 2,0 4,3" fill="#555"/></svg>
      <svg class="abs" style="left:108.4px;top:251.8px" width="4" height="3" viewBox="0 0 4 3"><polygon points="0,0 2,3 4,0" fill="#444"/></svg>
      <div class="abs" style="left:113px;top:0;width:1px;height:256px;background:#ebebeb"></div>
    </div>
    <div id="main" class="abs">
      <div class="abs" style="left:460.8px;top:0;width:7.2px;height:256px;background:#fbfbfb"></div><svg class="abs" style="left:462.4px;top:1.6px" width="4" height="3" viewBox="0 0 4 3"><polygon points="0,3 2,0 4,3" fill="#555"/></svg><svg class="abs" style="left:462.4px;top:251.6px" width="4" height="3" viewBox="0 0 4 3"><polygon points="0,0 2,3 4,0" fill="#777"/></svg><div class="abs" style="left:462.6px;top:147px;width:2.6px;height:10px;background:#777;border-radius:1.3px"></div>
      <div id="slide" class="abs">
        <div id="green" class="abs"></div>
        <!-- photo 1 -->
        <div class="abs" style="left:29px;top:88px;width:87px;height:50px;background:#a4af57"></div>
        <svg class="abs" style="left:23.7px;top:80.8px" width="89" height="52" viewBox="0 0 89 52">
          <defs><filter id="b1" x="-20%" y="-20%" width="140%" height="140%"><feGaussianBlur stdDeviation="1.1"/></filter>
          <clipPath id="c1"><rect width="89" height="52"/></clipPath></defs>
          <g clip-path="url(#c1)">
          <rect width="89" height="52" fill="#cbbfbb"/>
          <g filter="url(#b1)">
            <polygon points="38,14 52,3 66,14 66,30 38,30" fill="#ebe7e4"/>
            <rect x="0" y="37" width="89" height="15" fill="#e3e1e4"/>
            <ellipse cx="5" cy="6" rx="8" ry="7" fill="#2a2320"/>
            <ellipse cx="6" cy="12" rx="4" ry="4" fill="#9c6d54"/>
            <path d="M0 16 L11 17 L14 38 L0 38Z" fill="#e9e4de"/>
            <ellipse cx="32" cy="13" rx="5" ry="4" fill="#4a3a30"/>
            <ellipse cx="33" cy="18" rx="3.5" ry="4" fill="#c79c82"/>
            <path d="M17 24 L30 21 L39 23 L38 37 L16 37Z" fill="#1f2c47"/>
            <path d="M30 22 L34 22 L33 36 L31 36Z" fill="#e8e8ec"/>
            <ellipse cx="56" cy="5" rx="5" ry="4.5" fill="#2c241f"/>
            <ellipse cx="56" cy="10" rx="3" ry="4" fill="#c9a089"/>
            <path d="M46 17 L62 14 L64 30 L60 39 L44 38 L41 32Z" fill="#7b6652"/>
            <ellipse cx="71" cy="18" rx="6" ry="8" fill="#2a1d1a"/>
            <ellipse cx="70" cy="20" rx="3" ry="4" fill="#b88a72"/>
            <path d="M76 22 L86 30 L88 40 L78 40Z" fill="#3a3336"/>
            <path d="M60 27 L84 27 L82 41 L60 41Z" fill="#d4d4d9"/>
            <rect x="24" y="40" width="30" height="3" fill="#e8d45a"/>
            <rect x="10" y="38" width="14" height="2" fill="#3b4668"/>
          </g></g>
        </svg>
        <!-- photo 2 -->
        <div class="abs" style="left:171px;top:88px;width:87px;height:50px;background:#a4af57"></div>
        <svg class="abs" style="left:165px;top:80.8px" width="89" height="52" viewBox="0 0 89 52">
          <g clip-path="url(#c1)">
          <rect width="89" height="52" fill="#dfe2e8"/>
          <g filter="url(#b1)">
            <path d="M0 0 L24 0 L12 20 L16 52 L0 52Z" fill="#aeb3bd"/>
            <path d="M0 24 L10 28 L18 52 L0 52Z" fill="#666b75"/>
            <path d="M26 2 L40 6 L36 22 L24 16Z" fill="#4a6687"/>
            <path d="M30 0 L38 0 L36 6 L28 5Z" fill="#2a2d33"/>
            <path d="M12 19 L28 8 L38 34 L27 41Z" fill="#e9e7df"/>
            <path d="M10 20 L14 17 L28 42 L21 42Z" fill="#262d38"/>
            <path d="M30 27 L54 24 L48 45 L21 42Z" fill="#38547a"/>
            <path d="M36 29 L51 27 L47 38 L34 39Z" fill="#7a93b2"/>
            <path d="M47 0 L60 0 L49 15 L39 22 L36 18Z" fill="#c7a48c"/>
            <path d="M54 0 L89 0 L89 10 L70 19 L58 24 L53 17Z" fill="#d9d9de"/>
            <path d="M70 0 L89 0 L89 7 L76 8Z" fill="#2f3036"/>
            <path d="M64 20 L89 9 L89 46 L78 36 L68 30Z" fill="#23262e"/>
            <path d="M43 21 L58 18 L63 25 L48 28Z" fill="#c1967f"/>
            <path d="M60 25 L80 29 L89 35 L89 42 L70 37 L59 32Z" fill="#b58468"/>
            <path d="M60 30 L66 28 L68 34 L62 36Z" fill="#c23b3b"/>
            <path d="M44 33 L60 40 L74 50 L66 52 L52 44Z" fill="#d6af99"/>
            <path d="M56 42 L89 44 L89 52 L56 52Z" fill="#eadfda"/>
            <path d="M56 49 L76 47 L82 52 L54 52Z" fill="#4e433f"/>
            <ellipse cx="12" cy="13" rx="3" ry="4" fill="#8a6a50"/>
          </g></g>
        </svg>
        <!-- photo 3 -->
        <div class="abs" style="left:312px;top:88px;width:87px;height:50px;background:#a4af57"></div>
        <svg class="abs" style="left:306px;top:80.8px" width="90" height="52" viewBox="0 0 90 52">
          <g clip-path="url(#c1)">
          <rect width="90" height="52" fill="#1e1e20"/>
          <g filter="url(#b1)">
            <path d="M4 28 L74 0 L90 0 L90 26 L60 52 L10 52 Z" fill="#e6e7ea"/>
            <path d="M16 6 Q24 -2 34 4 L32 20 L20 24 Z" fill="#ece7e2"/>
            <ellipse cx="25" cy="2" rx="6" ry="4" fill="#d8bc94"/>
            <path d="M44 0 L58 0 L58 8 L48 10Z" fill="#e8e2dc"/>
            <path d="M56 16 L68 10 L72 20 L60 24Z" fill="#a9adb4"/>
            <path d="M36 22 L48 18 L50 26 L38 30Z" fill="#6e7b8c"/>
            <path d="M30 36 L44 32 L46 42 L32 44Z" fill="#25272c"/>
            <path d="M46 28 L56 26 L58 34 L48 36Z" fill="#2a2325"/>
            <path d="M48 36 L58 34 L58 38 L50 40Z" fill="#c4393f"/>
            <path d="M60 24 L74 22 L78 34 L90 30 L90 52 L70 52 L62 44Z" fill="#2a211f"/>
            <path d="M84 18 L90 16 L90 28 L86 28Z" fill="#2b2b30"/>
            <ellipse cx="30" cy="30" rx="2.5" ry="2" fill="#e8d24a"/>
            <path d="M0 34 L6 32 L8 52 L0 52Z" fill="#2c3c58"/>
            <path d="M34 44 L46 42 L48 52 L36 52Z" fill="#d0b3a0"/>
            <path d="M12 34 L22 30 L24 36 L14 40Z" fill="#aab0ba"/>
            <ellipse cx="9" cy="40" rx="3" ry="2" fill="#a63a3a"/>
          </g></g>
        </svg>
        <!-- col 1 text -->
        <div class="st" style="left:17.3px;top:148.5px">В умовах швидких змін<br>законодавства та технологій<br><span class="g">післядипломна освіта</span> є ключовим<br>інструментом підтримання<br>професійної компетентності<br>фахівців із землеустрою.</div>
        <!-- col 2 text -->
        <div class="st" style="left:152.3px;top:148.5px"><span class="g">Післядипломна освіта</span> дозволяє:<br><i class="bu">•</i>актуалізувати професійні знання<br><i class="bu">•</i>удосконалювати практичні<br><i class="bu"></i>навички<br><i class="bu">•</i>адаптуватися до нових викликів<br><i class="bu"></i>галузі</div>
        <!-- col 3 text -->
        <div class="st" style="left:298.5px;top:148.5px">Форми післядипломної освіти<br><i class="bu">•</i>курси підвищення кваліфікації<br><i class="bu">•</i>тренінги та семінари<br><i class="bu">•</i>спеціалізовані освітні програми<br><i class="bu">•</i>професійна сертифікація</div>
        <!-- footer -->
        <div class="st" id="cert" style="left:19.7px;top:239.7px;font-weight:bold;font-size:8px;letter-spacing:0.3px;color:#111;-webkit-text-stroke:0">Сертифікація підтверджує рівень кваліфікації та професійну відповідальність</div>
        <svg class="abs" style="left:390px;top:226px" width="46" height="22" viewBox="0 0 46 22">
          <polygon points="0.7,1 11.2,10.9 0.7,20.8" fill="#1d5240"/>
          <polygon points="16.7,1 27.3,10.9 16.7,20.8" fill="#a0ad4a"/>
          <polygon points="32.6,1 43.2,10.9 32.6,20.8" fill="#1d5240"/>
        </svg>
      </div>
    </div>
  </div>

  
  <div class="abs" style="left:10.4px;top:350.8px;width:15px;height:15px;border-radius:50%;background:#2f3331"></div>
  <svg class="abs" style="left:13.4px;top:354px" width="9" height="9" viewBox="0 0 9 9"><path d="M1 8 L1.6 5.6 L5.8 1.4 L7.6 3.2 L3.4 7.4 Z" fill="none" stroke="#24b583" stroke-width="1"/><path d="M2.6 6.4 L6 3" stroke="#24b583" stroke-width="0.9"/></svg>
  <div id="ztb" class="abs">
    <svg class="abs" style="left:19.5px;top:5.5px" width="12" height="12.4" viewBox="0 0 12 12.4"><rect x="4.2" y="0.8" width="3.6" height="6.4" rx="1.8" fill="#ddd"/><path d="M2.4 5.4 Q2.4 9 6 9 Q9.6 9 9.6 5.4 M6 9 L6 11.2 M4 11.4 L8 11.4" fill="none" stroke="#ddd" stroke-width="1.1"/><path d="M1.2 11 L10.6 0.8" stroke="#e8324a" stroke-width="1.2"/></svg>
    <svg class="abs" style="left:39.8px;top:9.6px" width="4.4" height="2.6" viewBox="0 0 4.4 2.6"><path d="M0.5 2.2 L2.2 0.6 L3.9 2.2" fill="none" stroke="#bdbdbd" stroke-width="0.8"/></svg>
    <div class="zl" style="left:26px">Audio</div>
    <svg class="abs" style="left:65.5px;top:6px" width="14" height="11" viewBox="0 0 14 11"><rect x="1" y="2.4" width="8" height="6.4" rx="1.2" fill="none" stroke="#ddd" stroke-width="1.1"/><path d="M9.4 5 L12.6 3 L12.6 8.4 L9.4 6.4Z" fill="none" stroke="#ddd" stroke-width="1.1"/><path d="M1.6 10.4 L11.6 0.6" stroke="#e8324a" stroke-width="1.2"/></svg>
    <svg class="abs" style="left:88.8px;top:9.6px" width="4.4" height="2.6" viewBox="0 0 4.4 2.6"><path d="M0.5 2.2 L2.2 0.6 L3.9 2.2" fill="none" stroke="#bdbdbd" stroke-width="0.8"/></svg>
    <div class="zl" style="left:72.8px">Video</div>
    <svg class="abs" style="left:219.5px;top:6.4px" width="11.6" height="10.6" viewBox="0 0 11.6 10.6"><circle cx="3.4" cy="2.2" r="1.5" fill="none" stroke="#e6e6e6" stroke-width="1.1"/><path d="M0.6 9.6 L0.6 7 Q0.6 5.2 2.4 5.2 L4 5.2 M0.6 9.6 L4.6 9.6" fill="none" stroke="#e6e6e6" stroke-width="1.1"/><circle cx="8" cy="4.6" r="1.5" fill="none" stroke="#e6e6e6" stroke-width="1.1"/><rect x="5.2" y="7.2" width="5.6" height="2.6" rx="1" fill="none" stroke="#e6e6e6" stroke-width="1.1"/></svg>
    <div class="t" style="left:233.8px;top:8.2px;font-size:6.3px;color:#e6e6e6">29</div>
    <svg class="abs" style="left:249.8px;top:9.6px" width="4.4" height="2.6" viewBox="0 0 4.4 2.6"><path d="M0.5 2.2 L2.2 0.6 L3.9 2.2" fill="none" stroke="#bdbdbd" stroke-width="0.8"/></svg>
    <div class="zl" style="left:225.6px">Participants</div>
    <svg class="abs" style="left:274.6px;top:5.8px" width="12.4" height="11.6" viewBox="0 0 12.4 11.6"><path d="M3.4 2.6 L3.4 1.6 Q3.4 0.6 4.4 0.6 L10.8 0.6 Q11.8 0.6 11.8 1.6 L11.8 5.6 Q11.8 6.6 10.8 6.6 L10 6.6" fill="none" stroke="#e6e6e6" stroke-width="1.1"/><path d="M1.6 2.8 L8 2.8 Q9 2.8 9 3.8 L9 7.4 Q9 8.4 8 8.4 L4.4 8.4 L2.4 10.6 L2.4 8.4 L1.6 8.4 Q0.6 8.4 0.6 7.4 L0.6 3.8 Q0.6 2.8 1.6 2.8Z" fill="none" stroke="#e6e6e6" stroke-width="1.1"/><circle cx="3" cy="5.6" r="0.5" fill="#e6e6e6"/><circle cx="4.8" cy="5.6" r="0.5" fill="#e6e6e6"/><circle cx="6.6" cy="5.6" r="0.5" fill="#e6e6e6"/></svg>
    <svg class="abs" style="left:295.3px;top:9.6px" width="4.4" height="2.6" viewBox="0 0 4.4 2.6"><path d="M0.5 2.2 L2.2 0.6 L3.9 2.2" fill="none" stroke="#bdbdbd" stroke-width="0.8"/></svg>
    <div class="zl" style="left:281.2px">Chat</div>
    <svg class="abs" style="left:316.8px;top:6.6px" width="13" height="10.6" viewBox="0 0 13 10.6"><path d="M6.5 9.8 Q0.6 6 0.8 3.2 Q1 0.8 3.4 0.8 Q5.4 0.8 6.5 2.6 Q7.6 0.8 9.6 0.8 Q12 0.8 12.2 3.2 Q12.4 6 6.5 9.8Z" fill="none" stroke="#e6e6e6" stroke-width="1.1"/></svg>
    <div class="zl" style="left:323.6px">React</div>
    <div class="abs" style="left:362px;top:7px;width:12px;height:9.6px;background:#1fd873;border-radius:1.6px"></div>
    <svg class="abs" style="left:365px;top:8.6px" width="6" height="6.6" viewBox="0 0 6 6.6"><path d="M3 0.2 L5.8 3 L4 3 L4 6.4 L2 6.4 L2 3 L0.2 3Z" fill="#0a0a0a"/></svg>
    <div class="zl" style="left:368px">Share</div>
    <svg class="abs" style="left:384.3px;top:9.6px" width="4.4" height="2.6" viewBox="0 0 4.4 2.6"><path d="M0.5 2.2 L2.2 0.6 L3.9 2.2" fill="none" stroke="#bdbdbd" stroke-width="0.8"/></svg>
    <svg class="abs" style="left:407.6px;top:6px" width="10.4" height="11.6" viewBox="0 0 10.4 11.6"><path d="M5.2 0.6 L9.6 2.2 L9.6 5.8 Q9.6 9.2 5.2 11 Q0.8 9.2 0.8 5.8 L0.8 2.2Z" fill="none" stroke="#e6e6e6" stroke-width="1.1"/><path d="M5.2 2.6 L5.2 5.8 L2.6 5.8 L2.6 3.4Z" fill="#e6e6e6"/><path d="M5.2 5.8 L7.8 5.8 Q7.6 8 5.2 9Z" fill="#e6e6e6"/></svg>
    <div class="zl" style="left:412.8px">Host tools</div>
    <svg class="abs" style="left:447px;top:6px" width="11.6" height="11.6" viewBox="0 0 11.6 11.6"><path d="M0.6 4 L0.6 2 Q0.6 0.6 2 0.6 L4 0.6" fill="none" stroke="#e6e6e6" stroke-width="1.1"/><circle cx="8.6" cy="2.8" r="2" fill="none" stroke="#e6e6e6" stroke-width="1.1"/><circle cx="2.8" cy="8.6" r="2" fill="none" stroke="#e6e6e6" stroke-width="1.1"/><path d="M11 7.4 L11 9.6 Q11 11 9.6 11 L7.4 11" fill="none" stroke="#e6e6e6" stroke-width="1.1"/></svg>
    <svg class="abs" style="left:465.6px;top:9.6px" width="4.4" height="2.6" viewBox="0 0 4.4 2.6"><path d="M0.5 2.2 L2.2 0.6 L3.9 2.2" fill="none" stroke="#bdbdbd" stroke-width="0.8"/></svg>
    <div class="zl" style="left:452.8px">Apps</div>
    <div class="abs" style="left:490.4px;top:7.2px;width:11.8px;height:8.8px;border:1.1px solid #e6e6e6;border-radius:1.8px"></div>
    <div class="t" style="left:492.3px;top:9.3px;font-size:5px;font-weight:bold;color:#e6e6e6;letter-spacing:0.1px">CC</div>
    <svg class="abs" style="left:511.3px;top:9.6px" width="4.4" height="2.6" viewBox="0 0 4.4 2.6"><path d="M0.5 2.2 L2.2 0.6 L3.9 2.2" fill="none" stroke="#bdbdbd" stroke-width="0.8"/></svg>
    <div class="zl" style="left:496.4px">Show captions</div>
    <div class="abs" style="left:541.4px;top:6.4px;width:11.4px;height:10.6px;border:1.1px solid #e6e6e6;border-radius:2.4px"></div>
    <div class="abs" style="left:545.4px;top:9.4px;width:1.3px;height:4.6px;background:#fff"></div><div class="abs" style="left:547.7px;top:9.4px;width:1.3px;height:4.6px;background:#fff"></div>
    <div class="abs" style="left:554.4px;top:6.4px;width:11.4px;height:10.6px;border:1.1px solid #e6e6e6;border-radius:2.4px"></div>
    <div class="abs" style="left:558px;top:9.5px;width:4.3px;height:4.3px;background:#fff;border-radius:0.6px"></div>
    <div class="zl" style="left:553.8px">Pause/stop recording</div>
    <div class="abs" style="left:600.3px;top:5px;width:12.5px;height:12.5px;border:1.1px solid #e6e6e6;border-radius:50%"></div>
    <div class="abs" style="left:603.4px;top:10.8px;width:1.1px;height:1.1px;border-radius:50%;background:#fff;box-shadow:2.55px 0 0 #fff,5.1px 0 0 #fff"></div>
    <div class="zl" style="left:606.5px">More</div>
    <svg class="abs" style="left:737.6px;top:5px" width="13.4" height="12.6" viewBox="0 0 13.4 12.6"><rect x="7.4" y="0.6" width="5.2" height="11" fill="#4a0d19" stroke="#b8203c" stroke-width="0.9"/><rect x="8" y="1.2" width="2.2" height="9.8" fill="#d02a48"/><circle cx="4.2" cy="2.6" r="1.5" fill="#e6e6e6"/><path d="M4.2 4.2 L3.8 8 L2 11.8 M3.8 8 L5.8 9.4 L6.2 12 M4 5.2 L1.8 6.8 M4.2 5.2 L6.6 6.8" fill="none" stroke="#e6e6e6" stroke-width="1.2"/></svg>
    <div class="zl" style="left:743.6px;font-size:5.8px;top:21.2px">Leave</div>
  </div>
  <div id="task" class="abs">
    <div class="abs" style="left:233.8px;top:6.9px;width:5.7px;height:5.6px;background:#2f9be8;border-radius:0.6px"></div>
    <div class="abs" style="left:240.0px;top:6.9px;width:5.7px;height:5.6px;background:#2a8fe6;border-radius:0.6px"></div>
    <div class="abs" style="left:233.8px;top:13.0px;width:5.7px;height:5.6px;background:#1f7fe0;border-radius:0.6px"></div>
    <div class="abs" style="left:240.0px;top:13.0px;width:5.7px;height:5.6px;background:#1a6fd8;border-radius:0.6px"></div>
    <div class="abs" style="left:253.2px;top:5.5px;width:108.8px;height:15px;border-radius:7.5px;background:#f1f4fb;box-shadow:0 0 0 0.5px #dbe1ee"></div>
    <svg class="abs" style="left:258.6px;top:9.1px" width="8" height="8" viewBox="0 0 8 8"><circle cx="3.2" cy="3.2" r="2.4" fill="none" stroke="#333" stroke-width="1"/><path d="M5 5 L7.4 7.4" stroke="#333" stroke-width="1.1"/></svg>
    <div class="t" style="left:271.4px;top:9.5px;font-size:6.9px;color:#5a5f68">Пошук</div>
    <svg class="abs" style="left:338px;top:6.1px" width="20" height="14" viewBox="0 0 20 14"><defs><filter id="bt"><feGaussianBlur stdDeviation="0.55"/></filter></defs><g filter="url(#bt)"><ellipse cx="10" cy="12" rx="8.5" ry="1.6" fill="#d9d6ea"/><path d="M3 3 L4.4 1.4 L6.4 3.2 L8 7 L12 6.4 Q14.6 6.6 15 9.4 L15.4 12 L13.4 12 L12.6 10 L8 10 L7.4 12 L5.4 12 L5 7 Z" fill="#c2b6d2"/><path d="M3.4 2.6 L5.8 3 L6.6 5.4 L4.6 5.6Z" fill="#9d8fb2"/><path d="M9 7 L12.6 6.6 L13.6 9 L9.6 9.4Z" fill="#e9e1ee"/><path d="M12.4 5.4 L13.6 4 L14.8 5.8 L15 8 L13.4 7.4Z" fill="#b4a6c6"/></g></svg>
    <svg class="abs" style="left:368.0px;top:6.300000000000001px" width="12" height="12" viewBox="-6 -6 12 12"><circle r="5.6" fill="#e7e7e7"/><path d="M0 0 L-4.85 -2.8 A5.6 5.6 0 0 1 4.85 -2.8 Z" fill="#e2453a"/><path d="M0 0 L4.85 -2.8 A5.6 5.6 0 0 1 0 5.6 Z" fill="#f6c12d"/><path d="M0 0 L0 5.6 A5.6 5.6 0 0 1 -4.85 -2.8 Z" fill="#2fa650"/><circle r="2.7" fill="#fff"/><circle r="2.1" fill="#4684ee"/></svg>
    <div class="abs" style="left:375.2px;top:4.0px;width:7.6px;height:7.6px;border-radius:50%;background:#17909e"></div><div class="t" style="left:377.8px;top:5.6px;font-size:4.6px;color:#d8f3f5">1</div><div class="abs" style="left:372.6px;top:20.9px;width:2.2px;height:1.1px;border-radius:0.6px;background:#8a8f98"></div>
    <svg class="abs" style="left:389.6px;top:7.5px" width="13" height="11" viewBox="0 0 13 11"><path d="M0.4 1.4 Q0.4 0.4 1.4 0.4 L4.6 0.4 L6 1.8 L11.6 1.8 Q12.6 1.8 12.6 2.8 L12.6 9.6 Q12.6 10.6 11.6 10.6 L1.4 10.6 Q0.4 10.6 0.4 9.6Z" fill="#e9a724"/><path d="M0.4 4 L12.6 4 L12.6 9.6 Q12.6 10.6 11.6 10.6 L1.4 10.6 Q0.4 10.6 0.4 9.6Z" fill="#f9d253"/><path d="M1.6 8.6 L11.4 8.6 L11.4 10 L1.6 10Z" fill="#2a7fd8"/></svg>
    <svg class="abs" style="left:411.6px;top:7.1px" width="12.4" height="12.4" viewBox="0 0 12.4 12.4"><defs><linearGradient id="eg" x1="0" y1="0" x2="1" y2="1"><stop offset="0" stop-color="#35c1b1"/><stop offset="0.5" stop-color="#1b8fd8"/><stop offset="1" stop-color="#1259b8"/></linearGradient></defs><circle cx="6.2" cy="6.2" r="5.8" fill="url(#eg)"/><path d="M3.2 7 Q3.2 4 6.6 4 Q9.6 4 9.8 6.4 Q9.4 8 7.4 7.6 Q8 6.4 6.6 5.8 Q4.6 5.8 4.8 8.2 Q5.4 10.6 8.8 10.4 Q5.6 12.4 3.6 9.4 Q3.2 8.4 3.2 7Z" fill="#dff6f4"/></svg>
    <svg class="abs" style="left:433.4px;top:6.9px" width="12.4" height="12.4" viewBox="0 0 12.4 12.4"><path d="M4 3 L4 1.4 Q4 0.6 4.8 0.6 L7.6 0.6 Q8.4 0.6 8.4 1.4 L8.4 3" fill="none" stroke="#1d5fa8" stroke-width="0.9"/><rect x="0.6" y="2.8" width="11.2" height="9" rx="1.2" fill="#1a62b4"/><rect x="3.8" y="4.8" width="2.2" height="2.2" fill="#f25022"/><rect x="6.4" y="4.8" width="2.2" height="2.2" fill="#7fba00"/><rect x="3.8" y="7.4" width="2.2" height="2.2" fill="#00a4ef"/><rect x="6.4" y="7.4" width="2.2" height="2.2" fill="#ffb900"/></svg>
    <svg class="abs" style="left:456px;top:7.1px" width="12" height="12" viewBox="0 0 12 12"><path d="M0.6 1.4 Q0.6 0.6 1.4 0.6 L9.6 0.6 L11.4 2.4 L11.4 10.6 Q11.4 11.4 10.6 11.4 L1.4 11.4 Q0.6 11.4 0.6 10.6Z" fill="#2d4fb0"/><rect x="2.8" y="0.6" width="5.6" height="3.4" fill="#e8ecf6"/><rect x="6.4" y="1" width="1.2" height="2.4" fill="#2d4fb0"/><rect x="2.4" y="6" width="7.2" height="5.4" fill="#f4f4f8"/><rect x="5.4" y="8.4" width="2.8" height="1.8" fill="#f0a04a"/></svg>
    <svg class="abs" style="left:478.4px;top:7.9px" width="12" height="12" viewBox="-6 -6 12 12"><circle r="5.6" fill="#e7e7e7"/><path d="M0 0 L-4.85 -2.8 A5.6 5.6 0 0 1 4.85 -2.8 Z" fill="#e2453a"/><path d="M0 0 L4.85 -2.8 A5.6 5.6 0 0 1 0 5.6 Z" fill="#f6c12d"/><path d="M0 0 L0 5.6 A5.6 5.6 0 0 1 -4.85 -2.8 Z" fill="#2fa650"/><circle r="2.7" fill="#fff"/><circle r="2.1" fill="#4684ee"/></svg>
    <div class="abs" style="left:485.6px;top:5.7px;width:5.6px;height:7.6px;border-radius:2.4px 2.4px 1px 1px;background:#e88a2a"></div><div class="abs" style="left:487.2px;top:6.5px;width:2.4px;height:2.4px;border-radius:50%;background:#f9d9b3"></div>
    <div class="abs" style="left:483.4px;top:20.9px;width:2.2px;height:1.1px;border-radius:0.6px;background:#8a8f98"></div>
    <div class="abs" style="left:497.6px;top:3.9px;width:19px;height:18.6px;border-radius:2.4px;background:rgba(255,255,255,0.62)"></div>
    <div class="abs" style="left:500.8px;top:6.9px;width:12.6px;height:12.6px;border-radius:50%;background:#1f62e8"></div>
    <div class="t" style="left:503.1px;top:11.7px;font-size:3.4px;color:#fff;font-weight:bold;letter-spacing:-0.05px">zoom</div>
    <div class="abs" style="left:503.4px;top:20.7px;width:7.4px;height:1.3px;border-radius:0.7px;background:#1a6fd8"></div>
    <svg class="abs" style="left:521px;top:7.1px" width="13" height="12" viewBox="0 0 13 12"><rect x="4" y="0.6" width="8.4" height="9.6" rx="1" fill="#3a96e8"/><rect x="4" y="0.6" width="8.4" height="3.4" fill="#7cc2f6"/><rect x="4" y="6.8" width="8.4" height="3.4" fill="#1b5fb8"/><rect x="0.6" y="3.4" width="6.6" height="6.6" rx="1" fill="#1565c0"/><ellipse cx="3.9" cy="6.7" rx="1.7" ry="1.9" fill="none" stroke="#fff" stroke-width="0.9"/></svg>
    <div class="abs" style="left:526.4px;top:20.9px;width:2.4px;height:1.1px;border-radius:0.6px;background:#8a8f98"></div>
    <svg class="abs" style="left:606.4px;top:10.7px" width="6" height="4" viewBox="0 0 6 4"><path d="M0.6 3.2 L3 0.8 L5.4 3.2" fill="none" stroke="#333" stroke-width="0.9"/></svg>
    <svg class="abs" style="left:621px;top:8.1px" width="9.6" height="9.6" viewBox="0 0 9.6 9.6"><path d="M1.4 5.6 A3.4 3.4 0 0 1 7.4 2.6" fill="none" stroke="#e08a2a" stroke-width="1.1"/><path d="M8 4 A3.4 3.4 0 0 1 2.2 7.2" fill="none" stroke="#3d7fe0" stroke-width="1.1"/><rect x="5.4" y="5.6" width="3.6" height="3.4" rx="0.6" fill="#f2b63a"/></svg>
    <svg class="abs" style="left:638px;top:7.3px" width="7" height="10.4" viewBox="0 0 7 10.4"><rect x="2" y="0.4" width="3" height="5.6" rx="1.5" fill="#4b9af0"/><path d="M0.8 4.6 Q0.8 7.4 3.5 7.4 Q6.2 7.4 6.2 4.6 M3.5 7.4 L3.5 9.6 M2 9.8 L5 9.8" fill="none" stroke="#3a86e0" stroke-width="0.8"/></svg>
    <div class="t" style="left:655px;top:10.4px;font-size:5.6px;color:#2a2a2a">ENG</div>
    <svg class="abs" style="left:674px;top:8.9px" width="9" height="7" viewBox="0 0 9 7"><path d="M0.5 2.4 Q4.5 -1.2 8.5 2.4" fill="none" stroke="#444" stroke-width="0.8"/><path d="M2 4 Q4.5 1.8 7 4" fill="none" stroke="#444" stroke-width="0.8"/><circle cx="4.5" cy="5.6" r="0.8" fill="#444"/></svg>
    <svg class="abs" style="left:686.4px;top:8.9px" width="7" height="7" viewBox="0 0 7 7"><path d="M0.6 2.4 L2.2 2.4 L4.2 0.6 L4.2 6.4 L2.2 4.6 L0.6 4.6Z" fill="none" stroke="#444" stroke-width="0.7"/><path d="M5.4 2 Q6.6 3.5 5.4 5" fill="none" stroke="#888" stroke-width="0.6"/></svg>
    <div class="abs" style="left:699px;top:9.5px;width:11.4px;height:5.8px;border-radius:2.2px;background:#3f9f3c"></div><div class="abs" style="left:702px;top:11.1px;width:1.6px;height:2.4px;background:#d9f0d4"></div><div class="abs" style="left:705.6px;top:11.1px;width:1.6px;height:2.4px;background:#d9f0d4"></div>
    <div class="t" style="right:21.399999999999977px;top:5.5px;font-size:5.6px;color:#2a2a2a">13:17</div>
    <div class="t" style="right:21.399999999999977px;top:13.1px;font-size:5.6px;color:#2a2a2a">27.02.2026</div>
    <svg class="abs" style="left:750.4px;top:7.5px" width="8" height="9" viewBox="0 0 8 9"><path d="M1 6.6 Q2 5.6 2 3.4 Q2 1 4 1 Q6 1 6 3.4 Q6 5.6 7 6.6 Z" fill="#333"/><path d="M3.2 7.4 Q4 8.4 4.8 7.4" fill="none" stroke="#333" stroke-width="0.8"/><path d="M5.4 0.6 L7.2 0.6 L5.6 2.4 L7.4 2.4" fill="none" stroke="#333" stroke-width="0.5"/></svg>
  </div>
</div>
</body>
</html>
